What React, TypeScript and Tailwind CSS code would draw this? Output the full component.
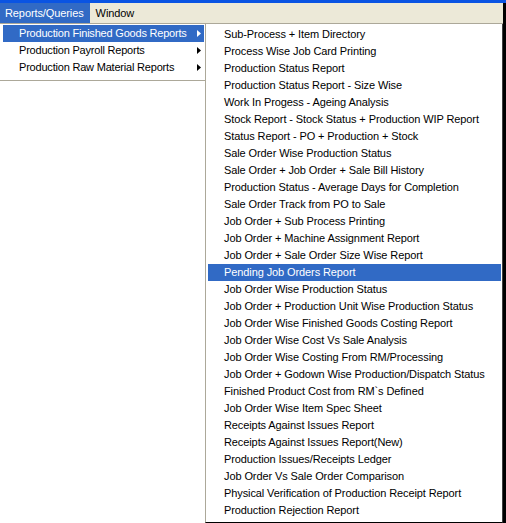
import React from 'react'

const font = { fontFamily: '"Liberation Sans", Arial, sans-serif' }

const topItems = [
  { label: 'Production Finished Goods Reports', active: true },
  { label: 'Production Payroll Reports' },
  { label: 'Production Raw Material Reports' },
]

const reports = [
  'Sub-Process + Item Directory',
  'Process Wise Job Card Printing',
  'Production Status Report',
  'Production Status Report - Size Wise',
  'Work In Progess - Ageing Analysis',
  'Stock Report - Stock Status + Production WIP Report',
  'Status Report - PO + Production + Stock',
  'Sale Order Wise Production Status',
  'Sale Order + Job Order + Sale Bill History',
  'Production Status - Average Days for Completion',
  'Sale Order Track from PO to Sale',
  'Job Order + Sub Process Printing',
  'Job Order + Machine Assignment Report',
  'Job Order + Sale Order Size Wise Report',
  'Pending Job Orders Report',
  'Job Order Wise Production Status',
  'Job Order + Production Unit Wise Production Status',
  'Job Order Wise Finished Goods Costing Report',
  'Job Order Wise Cost Vs Sale Analysis',
  'Job Order Wise Costing From RM/Processing',
  'Job Order + Godown Wise Production/Dispatch Status',
  'Finished Product Cost from RM`s Defined',
  'Job Order Wise Item Spec Sheet',
  'Receipts Against Issues Report',
  'Receipts Against Issues Report(New)',
  'Production Issues/Receipts Ledger',
  'Job Order Vs Sale Order Comparison',
  'Physical Verification of Production Receipt Report',
  'Production Rejection Report',
]

function Arrow({ white }: { white?: boolean }) {
  return (
    <svg width="4" height="7" viewBox="0 0 4 7" className="shrink-0">
      <path d="M0 0 L4 3.5 L0 7 Z" fill={white ? '#ffffff' : '#000000'} />
    </svg>
  )
}

export default function App() {
  return (
    <div className="w-[506px] h-[523px] bg-white overflow-hidden text-[11px] leading-none text-black tracking-[-0.1px]" style={font}>
      <div className="h-[3px] bg-[#0a54e3]" />
      <div className="flex">
        <div className="w-[503px]">
          {/* menu bar */}
          <div className="h-[21px] bg-[#ece9d8] border-b border-[#aca899] flex items-stretch">
            <div className="bg-[#316ac5] text-white pl-[5px] pr-[6px] flex items-center">Reports/Queries</div>
            <div className="px-[6px] flex items-center">Window</div>
          </div>
          <div className="flex items-start">
            {/* first dropdown */}
            <div className="w-[205px] bg-white border-b border-[#aca899] pt-[1px] pb-[4px] pl-[3px] pr-[1px]">
              {topItems.map((it) => (
                <div
                  key={it.label}
                  className={`h-[17px] flex items-center pl-[16px] pr-[3px] tracking-[-0.2px] ${it.active ? 'bg-[#316ac5] text-white' : ''}`}
                >
                  <span className="flex-1 whitespace-nowrap">{it.label}</span>
                  <Arrow white={it.active} />
                </div>
              ))}
            </div>
            {/* submenu */}
            <div className="flex-1 h-[499px] bg-white border-l border-[#aca899] border-b border-b-black border-r border-r-[#404040] pt-[2px] pl-[2px] pr-[1px]">
              {reports.map((r) => {
                const active = r === 'Pending Job Orders Report'
                return (
                  <div
                    key={r}
                    className={`h-[17px] flex items-center pl-[16px] whitespace-nowrap ${active ? 'bg-[#316ac5] text-white' : ''}`}
                  >
                    {r}
                  </div>
                )
              })}
            </div>
          </div>
        </div>
        <div className="w-[3px] h-[520px] bg-black" />
      </div>
    </div>
  )
}
